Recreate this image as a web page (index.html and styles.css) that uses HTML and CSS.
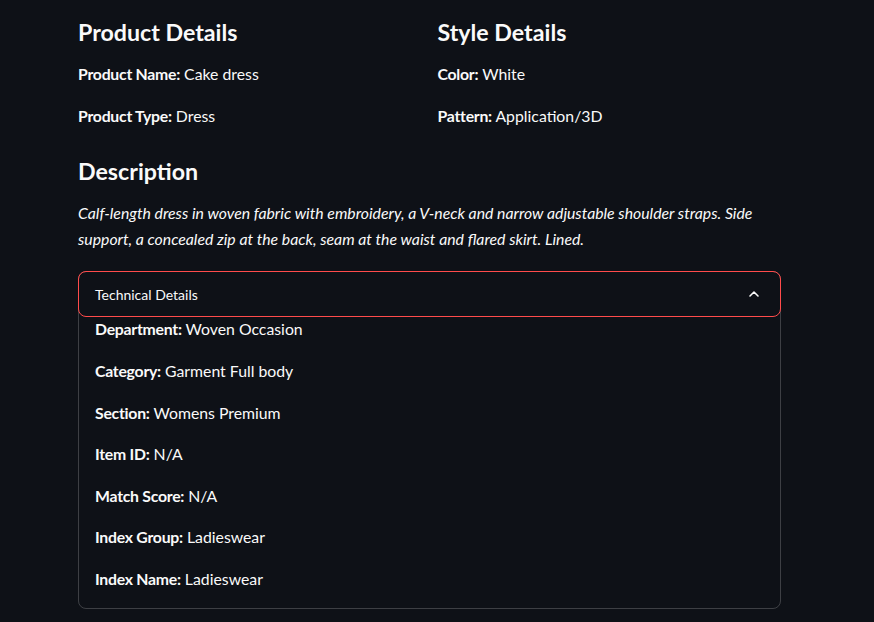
FILE: index.html
```html
<!DOCTYPE html>
<html>
<head>
<meta charset="utf-8">
<link rel="stylesheet" href="styles.css">
</head>
<body>
<main class="page">
  <section class="cols">
    <div class="col">
      <h3 class="heading">Product Details</h3>
      <p class="line"><b>Product Name:</b> Cake dress</p>
      <p class="line"><b>Product Type:</b> Dress</p>
    </div>
    <div class="col">
      <h3 class="heading">Style Details</h3>
      <p class="line"><b>Color:</b> White</p>
      <p class="line"><b>Pattern:</b> Application/3D</p>
    </div>
  </section>
  <h3 class="heading desc-heading">Description</h3>
  <p class="line desc"><i>Calf-length dress in woven fabric with embroidery, a V-neck and narrow adjustable shoulder straps. Side support, a concealed zip at the back, seam at the waist and flared skirt. Lined.</i></p>
  <div class="expander">
    <div class="exp-header">
      <span class="exp-title">Technical Details</span>
      <svg class="chev" width="12" height="12" viewBox="0 0 12 12"><path d="M2 8 L6 4 L10 8" fill="none" stroke="#fafafa" stroke-width="1.6" stroke-linecap="round" stroke-linejoin="round"/></svg>
    </div>
    <div class="exp-body">
      <p class="line"><b>Department:</b> Woven Occasion</p>
      <p class="line"><b>Category:</b> Garment Full body</p>
      <p class="line"><b>Section:</b> Womens Premium</p>
      <p class="line"><b>Item ID:</b> N/A</p>
      <p class="line"><b>Match Score:</b> N/A</p>
      <p class="line"><b>Index Group:</b> Ladieswear</p>
      <p class="line"><b>Index Name:</b> Ladieswear</p>
    </div>
  </div>
</main>
</body>
</html>
```
FILE: styles.css
```css
* { box-sizing: border-box; }
html, body {
  margin: 0;
  padding: 0;
  background: #0e1117;
}
body {
  font-family: "Lato", "Noto Sans", sans-serif;
  color: #fafafa;
  font-size: 15.8px;
}
.page {
  width: 703px;
  margin-left: 78px;
  padding-top: 16px;
}
.cols {
  display: grid;
  grid-template-columns: 1fr 1fr;
  column-gap: 16px;
}
.heading {
  margin: 0;
  font-size: 23.2px;
  line-height: 32px;
  font-weight: 700;
  padding-bottom: 13px;
}
.desc-heading {
  margin-top: 11px;
}
.line {
  margin: 0 0 16px 0;
  line-height: 25.6px;
}
.line b {
  font-weight: 700;
  letter-spacing: -0.25px;
}
.desc { margin-bottom: 20px; }
.expander {
  border: 1px solid rgba(250, 250, 250, 0.2);
  border-radius: 8px;
}
.exp-header {
  margin: -1px -1px 0 -1px;
  height: 46px;
  border: 1px solid #ff4b4b;
  border-radius: 8px;
  display: flex;
  align-items: center;
  justify-content: space-between;
  padding: 0 20px 0 16px;
}
.exp-title {
  font-size: 14px;
}
.chev { display: block; }
.exp-body {
  padding: 0 16px;
  margin-top: -1px;
}
```
